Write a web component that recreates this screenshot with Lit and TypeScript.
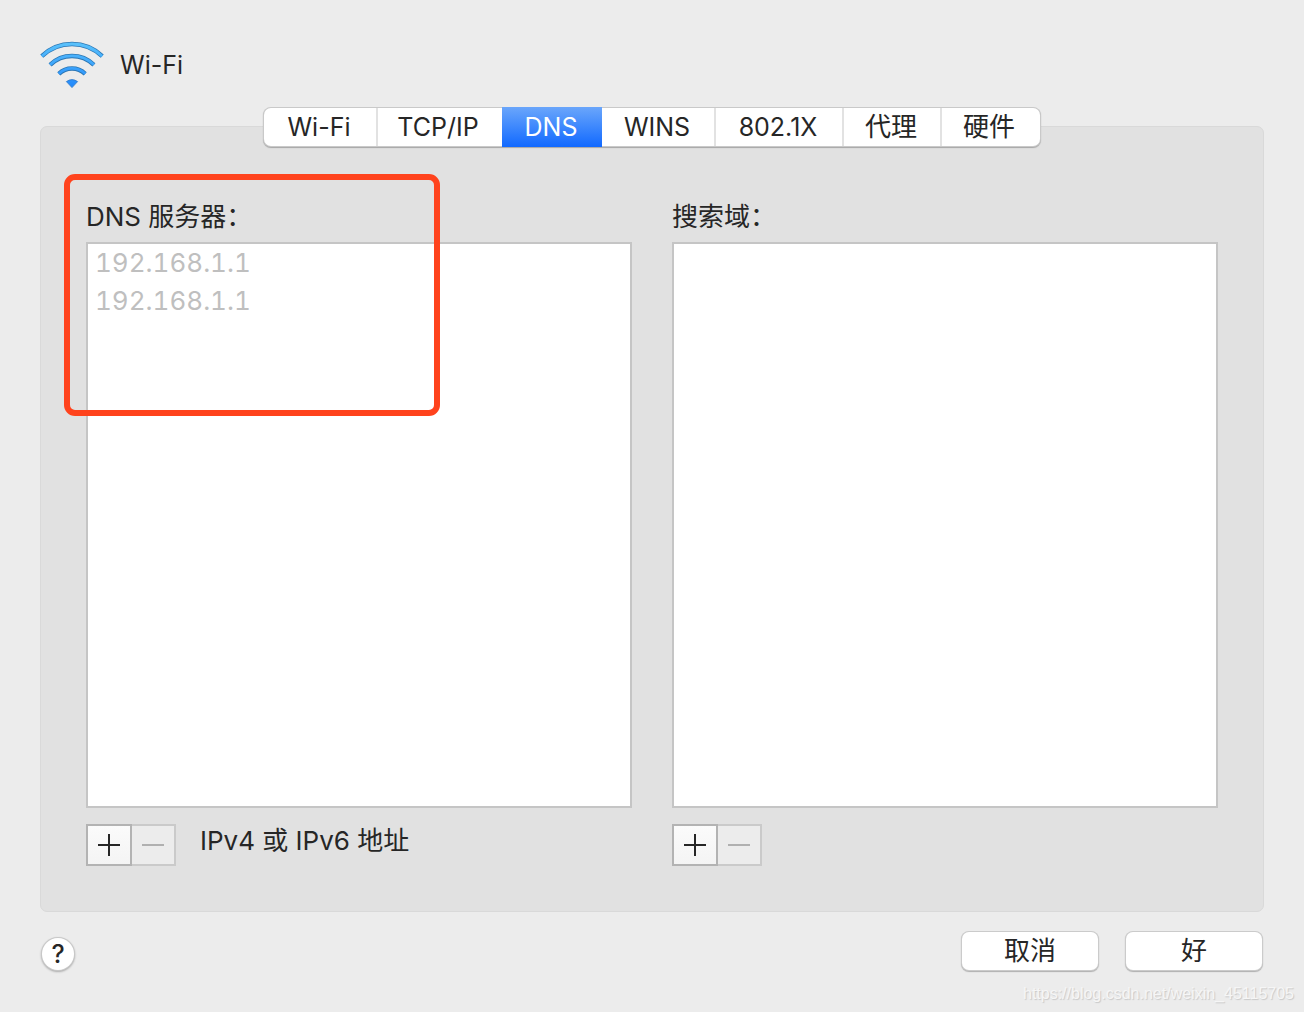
import { LitElement, html, css, svg } from "lit";
import { customElement, property, state } from "lit/decorators.js";
import { classMap } from "lit/directives/class-map.js";

const FONT = css`Inter, "Noto Sans CJK SC", sans-serif`;

@customElement("server-list")
class ServerList extends LitElement {
  @property() label = "";
  @property() hint = "";
  @property({ attribute: false }) items: string[] = [];

  static styles = css`
    :host {
      display: flex;
      flex-direction: column;
      flex: 1;
      min-width: 0;
      font-family: ${FONT};
      font-size: 26px;
      color: #262626;
    }
    .label {
      margin: 0;
      font-size: 26px;
      font-weight: 400;
      line-height: 40px;
      padding-bottom: 5px;
    }
    .list {
      flex: 1;
      min-height: 200px;
      margin: 0;
      padding: 0 7px;
      list-style: none;
      background: #fff;
      border: 2px solid #c5c5c5;
      line-height: 38px;
      color: #bfbfbf;
      font-variant-numeric: tabular-nums;
    }
    .tools {
      display: flex;
      align-items: flex-start;
      padding-top: 16px;
    }
    .tool {
      box-sizing: border-box;
      display: flex;
      align-items: center;
      justify-content: center;
      height: 42px;
      width: 46px;
      padding: 0;
      border: 2px solid #b3b3b3;
      background: linear-gradient(#fbfbfb, #f4f4f4);
      color: #262626;
    }
    .tool:disabled {
      width: 44px;
      border-color: #cacaca;
      border-left: 0;
      background: #ececec;
      color: #b0b0b0;
    }
    .hint {
      padding-left: 24px;
      line-height: 34px;
    }
  `;

  render() {
    return html`
      <h2 class="label" id="label">${this.label}</h2>
      <ul class="list" aria-labelledby="label">
        ${this.items.map((item) => html`<li>${item}</li>`)}
      </ul>
      <div class="tools">
        <button class="tool" aria-label="+">
          <svg width="22" height="22" viewBox="0 0 22 22">
            <path d="M0 11H22M11 0V22" stroke="currentColor" stroke-width="2" />
          </svg>
        </button>
        <button class="tool" aria-label="−" disabled>
          <svg width="22" height="22" viewBox="0 0 22 22">
            <path d="M0 11H22" stroke="currentColor" stroke-width="2" />
          </svg>
        </button>
        ${this.hint ? html`<span class="hint">${this.hint}</span>` : ""}
      </div>
    `;
  }
}

const ARCS = [
  "M1.8 15.2A43.5 43.5 0 0 1 62.2 15.2",
  "M10.1 23.8A31.5 31.5 0 0 1 53.9 23.8",
  "M18.8 32.8A19 19 0 0 1 45.2 32.8",
];

@customElement("app-root")
class AppRoot extends LitElement {
  @state() private active = "DNS";

  private tabs = ["Wi-Fi", "TCP/IP", "DNS", "WINS", "802.1X", "代理", "硬件"];

  static styles = css`
    :host {
      display: block;
      font-family: ${FONT};
      font-size: 25px;
      color: #262626;
    }
    .sheet {
      box-sizing: border-box;
      position: relative;
      display: flex;
      flex-direction: column;
      min-height: 100vh;
      padding: 40px 40px 42px;
      background: #ececec;
    }
    .header {
      display: flex;
      align-items: center;
      gap: 16px;
      height: 50px;
    }
    .title {
      margin: 0;
      font-size: 25px;
      font-weight: 400;
    }
    .tabs {
      z-index: 1;
      align-self: center;
      display: grid;
      grid-template-columns: 114px 124px 100px 114px 128px 98px 98px;
      height: 38px;
      margin: 18px 0 -20px;
      border-radius: 7px;
      background: #fff;
      box-shadow: 0 0 0 1px #c9c9c9, 0 1px 1px 1px #a6a6a6;
    }
    .tab {
      padding: 0 2px 0 0;
      border: 0;
      border-right: 2px solid #e2e2e2;
      background: none;
      font: inherit;
      line-height: 38px;
      color: inherit;
    }
    .tab.han {
      font-size: 26px;
    }
    .tab:nth-child(2),
    .tab:last-child {
      border-right-color: transparent;
    }
    .tab.active {
      margin: -1px 0;
      border: 0;
      background: linear-gradient(#6aa6fb, #1169ff);
      color: #fff;
    }
    .panel {
      position: relative;
      flex: 1;
      display: flex;
      gap: 40px;
      padding: 70px 45px 45px;
      border: 1px solid #d9d9d9;
      border-radius: 7px;
      background: #e1e1e1;
    }
    .mark {
      position: absolute;
      left: 23px;
      top: 47px;
      width: 364px;
      height: 230px;
      border: 6px solid #ff431d;
      border-radius: 11px;
      pointer-events: none;
    }
    .footer {
      display: flex;
      align-items: flex-start;
      gap: 28px;
      padding: 20px 2px 0;
    }
    .push {
      width: 136px;
      height: 38px;
      padding: 0;
      border: 0;
      border-radius: 7px;
      background: #fff;
      box-shadow: 0 0 0 1px #cbcbcb, 0 1px 1px 1px #b0b0b0;
      font: inherit;
      font-size: 26px;
      line-height: 38px;
      color: inherit;
    }
    .help {
      width: 32px;
      height: 32px;
      margin: 6px auto 0 0;
      padding: 0;
      border: 0;
      border-radius: 50%;
      background: #fff;
      box-shadow: 0 0 0 1px #c9c9c9, 0 1px 2px 1px #ababab;
      font: inherit;
      font-weight: 500;
      line-height: 32px;
      color: inherit;
    }
    .source {
      position: absolute;
      right: 10px;
      bottom: 8px;
      font: 16px/20px "Liberation Sans", sans-serif;
      color: #f6f6f6;
      text-shadow: 1px 1px 1px #c8c8c8;
    }
  `;

  render() {
    return html`
      <main class="sheet">
        <header class="header">
          <svg width="64" height="48" viewBox="0 0 64 48" aria-hidden="true">
            <defs>
              <linearGradient id="blue" gradientUnits="userSpaceOnUse" x1="0" y1="0" x2="0" y2="48">
                <stop offset="0" stop-color="#5cc4fb" />
                <stop offset="1" stop-color="#1f86fb" />
              </linearGradient>
            </defs>
            ${ARCS.map(
              (d) => svg`
                <path d=${d} fill="none" stroke="#2a76b4" stroke-width="4.4" />
                <path d=${d} fill="none" stroke="url(#blue)" stroke-width="2.8" />`
            )}
            <path
              d="M26.4 40.6Q32 36.6 37.6 40.6L32 46.6Z"
              fill="url(#blue)"
              stroke="#2a76c8"
              stroke-width=".8"
            />
          </svg>
          <h1 class="title">Wi-Fi</h1>
        </header>
        <div class="tabs" role="tablist">
          ${this.tabs.map(
            (tab) => html`<button
              role="tab"
              class=${classMap({
                tab: true,
                active: tab === this.active,
                han: /\p{Script=Han}/u.test(tab),
              })}
              aria-selected=${tab === this.active}
              @click=${() => (this.active = tab)}
            >${tab}</button>`
          )}
        </div>
        <section class="panel">
          <server-list
            label="DNS 服务器："
            hint="IPv4 或 IPv6 地址"
            .items=${["192.168.1.1", "192.168.1.1"]}
          ></server-list>
          <server-list label="搜索域："></server-list>
          <div class="mark"></div>
        </section>
        <footer class="footer">
          <button class="help">?</button>
          <button class="push">取消</button>
          <button class="push">好</button>
        </footer>
        <span class="source">https://blog.csdn.net/weixin_45115705</span>
      </main>
    `;
  }
}
